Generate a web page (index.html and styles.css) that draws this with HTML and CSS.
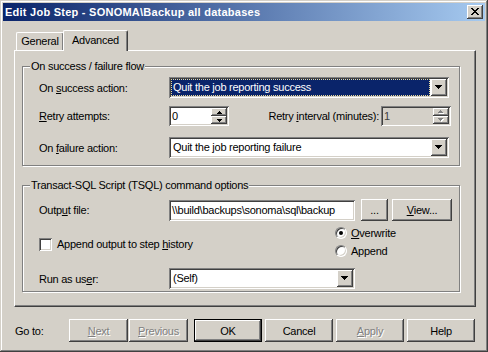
FILE: index.html
```html
<!DOCTYPE html>
<html>
    <head>
        <link rel="stylesheet" href="styles.css">
    </head>
    <body>
        <div class="window">
            <div class="titlebar">
                <span class="title">Edit Job Step - SONOMA\Backup all databases</span>
                <span class="close raised">
                    <svg width="8" height="7" viewBox="0 0 8 7" shape-rendering="crispEdges"><path d="M0 0h2v1h-2zM6 0h2v1h-2zM1 1h2v1h-2zM5 1h2v1h-2zM2 2h4v1h-4zM3 3h2v1h-2zM2 4h4v1h-4zM1 5h2v1h-2zM5 5h2v1h-2zM0 6h2v1h-2zM6 6h2v1h-2z"/></svg>
                </span>
            </div>

            <div class="tabs">
                <div class="tab tab-general">General</div>
                <div class="tab tab-active">Advanced</div>
            </div>

            <div class="panel">
                <!-- On success / failure flow -->
                <div class="group group-flow">
                    <div class="caption">On success / failure flow</div>
                    <div class="row row-first">
                        <span class="label">On <u>s</u>uccess action:</span>
                        <div class="combo combo-wide sunken">
                            <span class="combo-text focused">Quit the job reporting success</span>
                            <span class="drop raised">
                                <svg width="7" height="4" viewBox="0 0 7 4" shape-rendering="crispEdges"><path d="M0 0h7v1h-7zM1 1h5v1h-5zM2 2h3v1h-3zM3 3h1v1h-1z"/></svg>
                            </span>
                        </div>
                    </div>
                    <div class="row row-retry">
                        <span class="label"><u>R</u>etry attempts:</span>
                        <div class="spin spin-attempts sunken">
                            <span class="spin-text">0</span>
                            <span class="spin-btns">
                                <span class="spin-btn raised"><svg width="5" height="3" viewBox="0 0 5 3" shape-rendering="crispEdges"><path d="M2 0h1v1h-1zM1 1h3v1h-3zM0 2h5v1h-5z"/></svg></span>
                                <span class="spin-btn raised"><svg width="5" height="3" viewBox="0 0 5 3" shape-rendering="crispEdges"><path d="M0 0h5v1h-5zM1 1h3v1h-3zM2 2h1v1h-1z"/></svg></span>
                            </span>
                        </div>
                        <span class="interval-label">Retry <u>i</u>nterval (minutes):</span>
                        <div class="spin spin-interval spin-disabled sunken">
                            <span class="spin-text">1</span>
                            <span class="spin-btns">
                                <span class="spin-btn raised"><svg width="6" height="4" viewBox="0 0 6 4" shape-rendering="crispEdges"><path fill="#fff" d="M3 1h1v1h-1zM2 2h3v1h-3zM1 3h5v1h-5z"/><path fill="#808080" d="M2 0h1v1h-1zM1 1h3v1h-3zM0 2h5v1h-5z"/></svg></span>
                                <span class="spin-btn raised"><svg width="6" height="4" viewBox="0 0 6 4" shape-rendering="crispEdges"><path fill="#fff" d="M1 1h5v1h-5zM2 2h3v1h-3zM3 3h1v1h-1z"/><path fill="#808080" d="M0 0h5v1h-5zM1 1h3v1h-3zM2 2h1v1h-1z"/></svg></span>
                            </span>
                        </div>
                    </div>
                    <div class="row row-failure">
                        <span class="label">On <u>f</u>ailure action:</span>
                        <div class="combo combo-wide sunken">
                            <span class="combo-text">Quit the job reporting failure</span>
                            <span class="drop raised">
                                <svg width="7" height="4" viewBox="0 0 7 4" shape-rendering="crispEdges"><path d="M0 0h7v1h-7zM1 1h5v1h-5zM2 2h3v1h-3zM3 3h1v1h-1z"/></svg>
                            </span>
                        </div>
                    </div>
                </div>

                <!-- TSQL command options -->
                <div class="group group-tsql">
                    <div class="caption">Transact-SQL Script (TSQL) command options</div>
                    <div class="row row-output">
                        <span class="label">Outp<u>u</u>t file:</span>
                        <div class="edit sunken">\\build\backups\sonoma\sql\backup</div>
                        <span class="btn raised btn-browse">...</span>
                        <span class="btn raised btn-view"><u>V</u>iew...</span>
                    </div>
                    <div class="row row-options">
                        <div class="check-line">
                            <span class="checkbox"></span>
                            <span>Append output to step <u>h</u>istory</span>
                        </div>
                        <div class="radios">
                            <div class="radio-line">
                                <span class="radio checked"></span>
                                <span><u>O</u>verwrite</span>
                            </div>
                            <div class="radio-line">
                                <span class="radio"></span>
                                <span>Append</span>
                            </div>
                        </div>
                    </div>
                    <div class="row row-user">
                        <span class="label">Run as us<u>e</u>r:</span>
                        <div class="combo combo-short sunken">
                            <span class="combo-text">(Self)</span>
                            <span class="drop raised">
                                <svg width="7" height="4" viewBox="0 0 7 4" shape-rendering="crispEdges"><path d="M0 0h7v1h-7zM1 1h5v1h-5zM2 2h3v1h-3zM3 3h1v1h-1z"/></svg>
                            </span>
                        </div>
                    </div>
                </div>
            </div>

            <div class="footer">
                <span class="goto">Go to:</span>
                <span class="btn raised btn-nav disabled"><u>N</u>ext</span>
                <span class="btn raised btn-nav btn-prev disabled"><u>P</u>revious</span>
                <span class="btn raised btn-main btn-default">OK</span>
                <span class="btn raised btn-main">Cancel</span>
                <span class="btn raised btn-main disabled"><u>A</u>pply</span>
                <span class="btn raised btn-main">Help</span>
            </div>
        </div>
    </body>
</html>
```

FILE: styles.css
```css
* {
    box-sizing: border-box;
}
body {
    margin: 0;
    font-family: "Liberation Sans", Arial, sans-serif;
    font-size: 11px;
    letter-spacing: -0.25px;
    color: #000;
    background-color: #d4d0c8;
}
u {
    text-underline-offset: 1px;
}
.window {
    width: 488px;
    height: 352px;
    padding: 3px;
    background-color: #d4d0c8;
    box-shadow: inset -1px -1px #404040, inset 1px 1px #d4d0c8, inset -2px -2px #808080, inset 2px 2px #fff;
}

/* 3d edges */
.raised {
    background-color: #d4d0c8;
    box-shadow: inset -1px -1px #404040, inset 1px 1px #fff, inset -2px -2px #808080;
}
.sunken {
    box-shadow: inset 1px 1px #808080, inset -1px -1px #fff, inset 2px 2px #404040, inset -2px -2px #d4d0c8;
}

/* title bar */
.titlebar {
    height: 18px;
    display: flex;
    align-items: center;
    justify-content: space-between;
    padding: 0 2px;
    background: linear-gradient(to right, #0a246a, #a6caf0);
    color: #fff;
    font-weight: bold;
    letter-spacing: 0.25px;
}
.close {
    width: 16px;
    height: 14px;
    display: flex;
    align-items: center;
    justify-content: center;
    padding: 0 1px 1px 0;
}

/* tabs */
.tabs {
    display: flex;
    align-items: flex-end;
    height: 20px;
    margin: 9px 0 0 11px;
    padding-left: 2px;
    position: relative;
    z-index: 1;
}
.tab {
    height: 18px;
    line-height: 16px;
    text-align: center;
    background-color: #d4d0c8;
    border-top: 1px solid #fff;
    border-left: 1px solid #fff;
    border-right: 1px solid #404040;
    border-radius: 2px 2px 0 0;
    box-shadow: inset -1px 0 #808080;
}
.tab-general {
    width: 48px;
}
.tab-active {
    width: 65px;
    height: 21px;
    line-height: 19px;
    margin: 0 0 -1px -1px;
}

/* page */
.panel {
    width: 462px;
    height: 257px;
    margin-left: 11px;
    padding: 15px 0 0 7px;
    border-top: 1px solid #fff;
    border-left: 1px solid #fff;
    border-right: 1px solid #404040;
    border-bottom: 1px solid #404040;
    box-shadow: inset -1px -1px #808080;
}
.group {
    width: 438px;
    padding-left: 16px;
    border: 1px solid #808080;
    box-shadow: 1px 1px #fff, inset 1px 1px #fff;
}
.group-flow {
    height: 100px;
}
.group-tsql {
    height: 107px;
    margin-top: 19px;
}
.caption {
    display: table;
    margin: -7px 0 0 -9px;
    padding: 0 1px;
    line-height: 13px;
    background-color: #d4d0c8;
}
.row {
    display: flex;
    align-items: center;
}
.row-first {
    margin-top: 4px;
}
.row-retry {
    margin-top: 8px;
}
.row-failure {
    margin-top: 11px;
}
.row-output {
    margin-top: 7px;
}
.row-options {
    margin-top: 3px;
    height: 36px;
    align-items: flex-start;
}
.row-user {
    margin-top: 8px;
}
.label {
    width: 130px;
}

/* controls */
.combo {
    display: flex;
    align-items: center;
    height: 21px;
    padding: 2px;
    background-color: #fff;
}
.combo-wide {
    width: 280px;
}
.combo-short {
    width: 186px;
}
.combo-text {
    flex: 1;
    height: 17px;
    line-height: 17px;
    padding-left: 2px;
    white-space: nowrap;
    overflow: hidden;
}
.combo-text.focused {
    margin-right: 1px;
    padding-left: 1px;
    line-height: 15px;
    color: #fff;
    background-color: #0a246a;
    border: 1px dotted #e8da9a;
}
.drop {
    width: 16px;
    height: 17px;
    display: flex;
    align-items: center;
    justify-content: center;
    padding: 0 1px 1px 0;
}
.spin {
    display: flex;
    height: 20px;
    padding: 2px;
    background-color: #fff;
}
.spin-attempts {
    width: 60px;
}
.spin-interval {
    width: 70px;
}
.spin-disabled {
    background-color: #d4d0c8;
    color: #404040;
}
.spin-text {
    flex: 1;
    line-height: 16px;
    padding-left: 1px;
}
.spin-btns {
    width: 16px;
    display: flex;
    flex-direction: column;
}
.spin-btn {
    flex: 1;
    display: flex;
    align-items: center;
    justify-content: center;
}
.interval-label {
    width: 152px;
    padding-right: 2px;
    text-align: right;
}
.edit {
    width: 186px;
    height: 21px;
    padding: 0 3px;
    line-height: 21px;
    background-color: #fff;
    white-space: nowrap;
    overflow: hidden;
}
.btn {
    height: 23px;
    display: flex;
    align-items: center;
    justify-content: center;
}
.btn-browse {
    width: 27px;
    height: 22px;
    margin-left: 6px;
}
.btn-view {
    width: 60px;
    height: 22px;
    margin-left: 4px;
}
.check-line {
    width: 296px;
    display: flex;
    align-items: center;
    gap: 5px;
    margin-top: 14px;
    line-height: 13px;
}
.checkbox {
    width: 13px;
    height: 13px;
    background-color: #fff;
    box-shadow: inset 1px 1px #808080, inset -1px -1px #fff, inset 2px 2px #404040, inset -2px -2px #d4d0c8;
}
.radio-line {
    height: 18px;
    display: flex;
    align-items: center;
    gap: 4px;
}
.radio {
    width: 12px;
    height: 12px;
    display: flex;
    align-items: center;
    justify-content: center;
    border-radius: 50%;
    background-color: #fff;
    border: 1px solid;
    border-color: #808080 #fff #fff #808080;
    box-shadow: inset 1px 1px #404040, inset -1px -1px #d4d0c8;
}
.radio.checked::after {
    content: "";
    width: 4px;
    height: 4px;
    border-radius: 50%;
    background-color: #000;
}

/* bottom buttons */
.footer {
    display: flex;
    align-items: center;
    height: 23px;
    margin-top: 12px;
    padding-left: 12px;
}
.goto {
    width: 54px;
}
.btn-nav {
    width: 59px;
}
.btn-prev {
    margin-left: 1px;
}
.btn-main {
    width: 68px;
    margin-left: 3px;
}
.btn-default {
    margin-left: 6px;
    border: 1px solid #000;
}
.disabled {
    color: #808080;
    text-shadow: 1px 1px #fff;
}
```
